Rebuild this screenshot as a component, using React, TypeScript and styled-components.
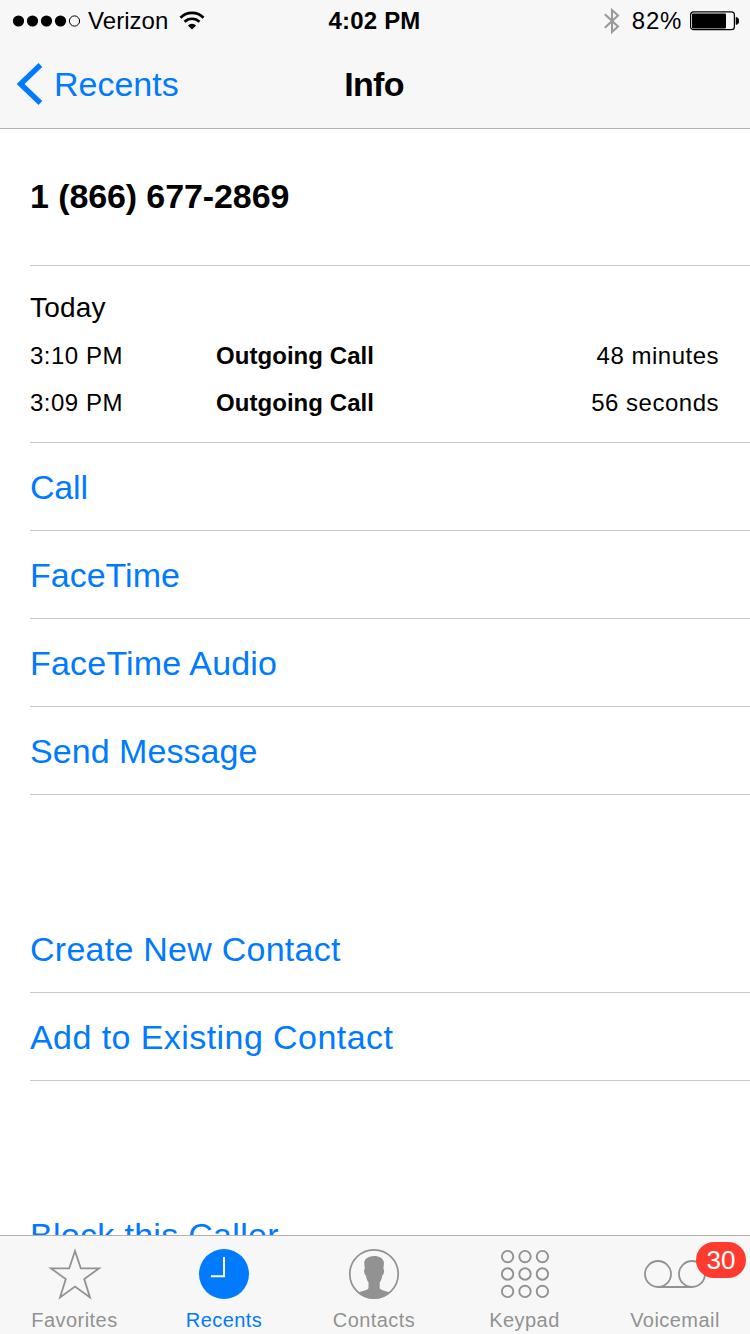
import React from 'react';
import styled, { createGlobalStyle } from 'styled-components';

const BLUE = '#007aff';
const GRAY = '#929292';

const GlobalStyle = createGlobalStyle`
  * { box-sizing: border-box; }
  body {
    margin: 0;
    background: #fff;
    color: #000;
    font-family: "Liberation Sans", Arial, sans-serif;
  }
`;

const Screen = styled.div`
  width: 750px;
  height: 1334px;
  display: flex;
  flex-direction: column;
  overflow: hidden;
  background: #fff;
`;

const Header = styled.header`
  flex: none;
  height: 129px;
  background: #f7f7f7;
  border-bottom: 1px solid #b2b2b2;
`;

const StatusBar = styled.div`
  height: 40px;
  display: grid;
  grid-template-columns: 1fr auto 1fr;
  align-items: center;
  padding: 2px 11px 0 12px;
  font-size: 24px;
  line-height: 28px;
`;

const StatusSide = styled.div<{ $end?: boolean }>`
  display: flex;
  align-items: center;
  justify-content: ${(p) => (p.$end ? 'flex-end' : 'flex-start')};
`;

const Carrier = styled.span`
  margin: 0 11px 0 7px;
  letter-spacing: 0.05px;
`;

const Clock = styled.span`
  margin-right: 2px;
  font-weight: 700;
  letter-spacing: 0.2px;
`;

const BatteryLevel = styled.span`
  margin: 0 8px 0 12px;
  letter-spacing: 0.7px;
`;

const NavBar = styled.div`
  height: 88px;
  display: grid;
  grid-template-columns: 1fr auto 1fr;
  align-items: center;
  padding: 0 18px 0 16px;
  font-size: 34px;
  line-height: 40px;
`;

const BackLink = styled.a`
  display: flex;
  align-items: center;
  gap: 11px;
  color: ${BLUE};
`;

const NavTitle = styled.h1`
  margin: 0;
  font-size: 34px;
  font-weight: 700;
  letter-spacing: -0.7px;
`;

const Content = styled.main`
  flex: 1;
  min-height: 0;
  overflow: hidden;
  padding-left: 30px;
`;

const NumberCard = styled.section`
  height: 137px;
  display: flex;
  align-items: center;
  padding-bottom: 2px;
  border-bottom: 1px solid #c8c7cc;
`;

const PhoneNumber = styled.h2`
  margin: 0;
  font-size: 34px;
  line-height: 40px;
  font-weight: 700;
  letter-spacing: -0.1px;
`;

const History = styled.section`
  height: 177px;
  padding: 24px 31px 0 0;
  border-bottom: 1px solid #c8c7cc;
`;

const Day = styled.div`
  height: 42px;
  font-size: 28px;
  line-height: 36px;
  letter-spacing: 0.2px;
`;

const CallRow = styled.div`
  display: grid;
  grid-template-columns: 186px 1fr auto;
  height: 47px;
  font-size: 24px;
  line-height: 47px;
  letter-spacing: 0.5px;
`;

const CallKind = styled.strong`
  letter-spacing: 0.05px;
`;

const ActionGroup = styled.section`
  margin-bottom: 110px;
`;

const Action = styled.a<{ $spacing?: number }>`
  display: flex;
  align-items: center;
  height: 88px;
  border-bottom: 1px solid #c8c7cc;
  color: ${BLUE};
  font-size: 34px;
  line-height: 40px;
  letter-spacing: ${(p) => p.$spacing ?? 0}px;
`;

const TabBar = styled.nav`
  flex: none;
  height: 99px;
  display: grid;
  grid-template-columns: 149px 150px 150px 151px 150px;
  background: #f7f7f7;
  border-top: 1px solid #b2b2b2;
`;

const Tab = styled.a<{ $active?: boolean }>`
  position: relative;
  display: flex;
  flex-direction: column;
  align-items: center;
  padding-top: 12px;
  color: ${(p) => (p.$active ? BLUE : GRAY)};
`;

const TabLabel = styled.span`
  margin-top: 8px;
  font-size: 20px;
  line-height: 24px;
  letter-spacing: 0.45px;
`;

const Badge = styled.span`
  position: absolute;
  top: 6px;
  right: 4px;
  width: 50px;
  height: 36px;
  border-radius: 18px;
  background: #ff3b30;
  color: #fff;
  font-size: 26px;
  line-height: 37px;
  text-align: center;
`;

const SignalDots = () => (
  <svg width="69" height="14" viewBox="0 0 69 14">
    {[6.5, 20.5, 34.5, 48.5].map((x) => (
      <circle key={x} cx={x} cy="7" r="5.6" />
    ))}
    <circle cx="62.5" cy="7" r="5.1" fill="none" stroke="#000" strokeWidth="1" />
  </svg>
);

const WifiIcon = () => (
  <svg width="26" height="20" viewBox="0 0 26 20" fill="none" stroke="#000">
    <path d="M1.5 6.7A16.3 16.3 0 0 1 24.5 6.7" strokeWidth="2.8" />
    <path d="M5.5 10.8A10.7 10.7 0 0 1 20.5 10.8" strokeWidth="2.6" />
    <path d="M13 18.5L8.9 14.4A5.8 5.8 0 0 1 17.1 14.4Z" fill="#000" stroke="none" />
  </svg>
);

const BluetoothIcon = () => (
  <svg width="16" height="28" viewBox="0 0 16 28" fill="none" stroke="#999" strokeWidth="2.1">
    <path d="M.8 7.2L14 19.6L8 25V3L14 8.4L.8 20.8" />
  </svg>
);

const BatteryIcon = () => (
  <svg width="49" height="20" viewBox="0 0 49 20">
    <rect x=".6" y=".9" width="43.8" height="17.8" rx="3" fill="none" stroke="#000" strokeWidth="1.2" />
    <rect x="2" y="2.4" width="34" height="15" rx="1" />
    <path d="M46 6.2a3.8 3.8 0 0 1 0 7.4z" stroke="#000" strokeWidth=".6" />
  </svg>
);

const BackChevron = () => (
  <svg width="27" height="42" viewBox="0 0 27 42" fill="none" stroke={BLUE} strokeWidth="5.4">
    <path d="M24.4 2L4.6 21L24.4 40" />
  </svg>
);

const StarIcon = () => (
  <svg width="54" height="52" viewBox="0 0 54 52" fill="none" stroke="currentColor" strokeWidth="1.8">
    <path d="M27 3L32.8 20.4H51L36.2 31L42 49.5L27 38.6L12 49.5L17.8 31L3 20.4H21.2Z" />
  </svg>
);

const RecentsIcon = () => (
  <svg width="52" height="52" viewBox="0 0 52 52">
    <circle cx="26" cy="26" r="25" fill="currentColor" />
    <path d="M26 9V28.2H12.9" fill="none" stroke="#fff" strokeWidth="2" />
  </svg>
);

const ContactIcon = () => (
  <svg width="52" height="52" viewBox="0 0 52 52">
    <circle cx="26" cy="26" r="24.2" fill="none" stroke="currentColor" strokeWidth="1.7" />
    <path
      d="M26 8C21 8.2 17 10 16.2 14.5L16.8 21C15.4 21.6 16.2 26.6 17.8 27.2C18.3 30.5 19.4 33 20.5 34.6V40C20 42.4 14 43 10 44.7A24.5 24.5 0 0 0 42 44.7C38 43 32.2 42.4 31.7 40V34.6C32.8 33 33.9 30.5 34.4 27.2C36 26.6 36.8 21.6 35.4 21L36 14.5C35.2 10 31 7.9 26 8Z"
      fill="currentColor"
    />
  </svg>
);

const KeypadIcon = () => (
  <svg width="52" height="52" viewBox="0 0 52 52" fill="none" stroke="currentColor" strokeWidth="1.9">
    {[8.6, 26, 43.4].map((y) =>
      [8.6, 26, 43.4].map((x) => <circle key={`${x}-${y}`} cx={x} cy={y} r="5.7" />),
    )}
  </svg>
);

const VoicemailIcon = () => (
  <svg width="64" height="52" viewBox="0 0 64 52" fill="none" stroke="currentColor" strokeWidth="1.8">
    <circle cx="15" cy="26" r="13" />
    <circle cx="49" cy="26" r="13" />
    <path d="M15 39H49" />
  </svg>
);

const calls = [
  { time: '3:10 PM', kind: 'Outgoing Call', length: '48 minutes' },
  { time: '3:09 PM', kind: 'Outgoing Call', length: '56 seconds' },
];

const actionGroups: { label: string; spacing?: number }[][] = [
  [
    { label: 'Call', spacing: -0.2 },
    { label: 'FaceTime' },
    { label: 'FaceTime Audio', spacing: 0.2 },
    { label: 'Send Message', spacing: 0.05 },
  ],
  [
    { label: 'Create New Contact', spacing: 0.25 },
    { label: 'Add to Existing Contact', spacing: 0.43 },
  ],
  [{ label: 'Block this Caller', spacing: 0.3 }],
];

const tabs = [
  { label: 'Favorites', icon: <StarIcon /> },
  { label: 'Recents', icon: <RecentsIcon />, active: true },
  { label: 'Contacts', icon: <ContactIcon /> },
  { label: 'Keypad', icon: <KeypadIcon /> },
  { label: 'Voicemail', icon: <VoicemailIcon />, badge: 30 },
];

export default function App() {
  return (
    <>
      <GlobalStyle />
      <Screen>
        <Header>
          <StatusBar>
            <StatusSide>
              <SignalDots />
              <Carrier>Verizon</Carrier>
              <WifiIcon />
            </StatusSide>
            <Clock>4:02 PM</Clock>
            <StatusSide $end>
              <BluetoothIcon />
              <BatteryLevel>82%</BatteryLevel>
              <BatteryIcon />
            </StatusSide>
          </StatusBar>
          <NavBar>
            <BackLink>
              <BackChevron />
              Recents
            </BackLink>
            <NavTitle>Info</NavTitle>
          </NavBar>
        </Header>
        <Content>
          <NumberCard>
            <PhoneNumber>1 (866) 677-2869</PhoneNumber>
          </NumberCard>
          <History>
            <Day>Today</Day>
            {calls.map((c) => (
              <CallRow key={c.time}>
                <span>{c.time}</span>
                <CallKind>{c.kind}</CallKind>
                <span>{c.length}</span>
              </CallRow>
            ))}
          </History>
          {actionGroups.map((group) => (
            <ActionGroup key={group[0].label}>
              {group.map((a) => (
                <Action key={a.label} $spacing={a.spacing}>
                  {a.label}
                </Action>
              ))}
            </ActionGroup>
          ))}
        </Content>
        <TabBar>
          {tabs.map((t) => (
            <Tab key={t.label} $active={t.active}>
              {t.icon}
              <TabLabel>{t.label}</TabLabel>
              {t.badge && <Badge>{t.badge}</Badge>}
            </Tab>
          ))}
        </TabBar>
      </Screen>
    </>
  );
}
